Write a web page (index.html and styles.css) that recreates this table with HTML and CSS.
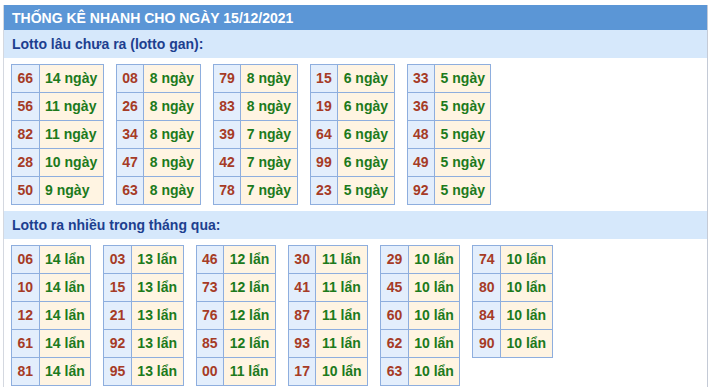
FILE: index.html
```html
<!DOCTYPE html>
<html lang="vi">
<head>
<meta charset="utf-8">
<link rel="stylesheet" href="styles.css">
</head>
<body>
<div class="box">
  <div class="title">THỐNG KÊ NHANH CHO NGÀY 15/12/2021</div>
  <div class="sub">Lotto lâu chưa ra (lotto gan):</div>
  <div class="tables">
    <table><tr><td class="n">66</td><td class="v">14 ngày</td></tr><tr><td class="n">56</td><td class="v">11 ngày</td></tr><tr><td class="n">82</td><td class="v">11 ngày</td></tr><tr><td class="n">28</td><td class="v">10 ngày</td></tr><tr><td class="n">50</td><td class="v">9 ngày</td></tr></table>
    <table><tr><td class="n">08</td><td class="v">8 ngày</td></tr><tr><td class="n">26</td><td class="v">8 ngày</td></tr><tr><td class="n">34</td><td class="v">8 ngày</td></tr><tr><td class="n">47</td><td class="v">8 ngày</td></tr><tr><td class="n">63</td><td class="v">8 ngày</td></tr></table>
    <table><tr><td class="n">79</td><td class="v">8 ngày</td></tr><tr><td class="n">83</td><td class="v">8 ngày</td></tr><tr><td class="n">39</td><td class="v">7 ngày</td></tr><tr><td class="n">42</td><td class="v">7 ngày</td></tr><tr><td class="n">78</td><td class="v">7 ngày</td></tr></table>
    <table><tr><td class="n">15</td><td class="v">6 ngày</td></tr><tr><td class="n">19</td><td class="v">6 ngày</td></tr><tr><td class="n">64</td><td class="v">6 ngày</td></tr><tr><td class="n">99</td><td class="v">6 ngày</td></tr><tr><td class="n">23</td><td class="v">5 ngày</td></tr></table>
    <table><tr><td class="n">33</td><td class="v">5 ngày</td></tr><tr><td class="n">36</td><td class="v">5 ngày</td></tr><tr><td class="n">48</td><td class="v">5 ngày</td></tr><tr><td class="n">49</td><td class="v">5 ngày</td></tr><tr><td class="n">92</td><td class="v">5 ngày</td></tr></table>
  </div>
  <div class="sub">Lotto ra nhiều trong tháng qua:</div>
  <div class="tables">
    <table><tr><td class="n">06</td><td class="v">14 lẩn</td></tr><tr><td class="n">10</td><td class="v">14 lẩn</td></tr><tr><td class="n">12</td><td class="v">14 lẩn</td></tr><tr><td class="n">61</td><td class="v">14 lẩn</td></tr><tr><td class="n">81</td><td class="v">14 lẩn</td></tr></table>
    <table><tr><td class="n">03</td><td class="v">13 lẩn</td></tr><tr><td class="n">15</td><td class="v">13 lẩn</td></tr><tr><td class="n">21</td><td class="v">13 lẩn</td></tr><tr><td class="n">92</td><td class="v">13 lẩn</td></tr><tr><td class="n">95</td><td class="v">13 lẩn</td></tr></table>
    <table><tr><td class="n">46</td><td class="v">12 lẩn</td></tr><tr><td class="n">73</td><td class="v">12 lẩn</td></tr><tr><td class="n">76</td><td class="v">12 lẩn</td></tr><tr><td class="n">85</td><td class="v">12 lẩn</td></tr><tr><td class="n">00</td><td class="v">11 lẩn</td></tr></table>
    <table><tr><td class="n">30</td><td class="v">11 lẩn</td></tr><tr><td class="n">41</td><td class="v">11 lẩn</td></tr><tr><td class="n">87</td><td class="v">11 lẩn</td></tr><tr><td class="n">93</td><td class="v">11 lẩn</td></tr><tr><td class="n">17</td><td class="v">10 lẩn</td></tr></table>
    <table><tr><td class="n">29</td><td class="v">10 lẩn</td></tr><tr><td class="n">45</td><td class="v">10 lẩn</td></tr><tr><td class="n">60</td><td class="v">10 lẩn</td></tr><tr><td class="n">62</td><td class="v">10 lẩn</td></tr><tr><td class="n">63</td><td class="v">10 lẩn</td></tr></table>
    <table><tr><td class="n">74</td><td class="v">10 lẩn</td></tr><tr><td class="n">80</td><td class="v">10 lẩn</td></tr><tr><td class="n">84</td><td class="v">10 lẩn</td></tr><tr><td class="n">90</td><td class="v">10 lẩn</td></tr></table>
  </div>
</div>
</body>
</html>
```
FILE: styles.css
```css
html, body {
  margin: 0;
  padding: 0;
  background: #fff;
}
body {
  padding-top: 5px;
  font-family: "Liberation Sans", Arial, sans-serif;
}
.box {
  margin-left: 3px;
  width: 703px;
  border-left: 1px solid #d4d8e0;
  border-right: 1px solid #c4cad6;
  height: 400px;
}
.title {
  background: #5b96d6;
  color: #fff;
  font-weight: bold;
  font-size: 14px;
  height: 25px;
  line-height: 26px;
  padding-left: 8px;
}
.sub {
  background: #d6e8fb;
  color: #1d3f8f;
  font-weight: bold;
  font-size: 14px;
  height: 28px;
  line-height: 28px;
  padding-left: 8px;
}
.tables {
  display: flex;
  align-items: flex-start;
  gap: 12px;
  padding: 6px 0 6px 7px;
}
table {
  border-collapse: collapse;
  font-size: 14px;
  font-weight: bold;
}
td {
  border: 1px solid #8eaede;
  height: 27px;
  padding: 0 5.5px;
  line-height: 27px;
}
td.n {
  background: #e3eefc;
  color: #a63b26;
  text-align: center;
}
td.v {
  background: #fff4e2;
  color: #1c7a1c;
}
```
